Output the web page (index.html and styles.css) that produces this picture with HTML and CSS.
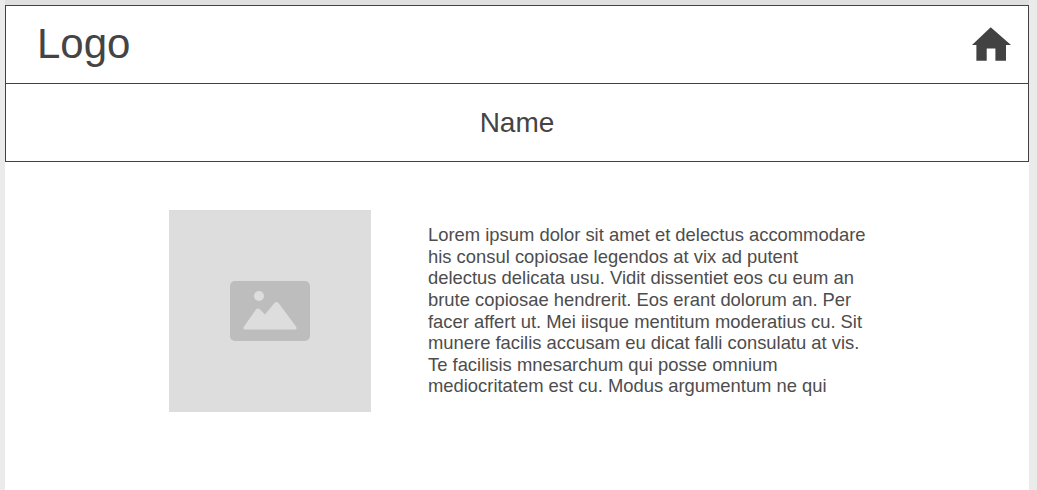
FILE: index.html
```html
<!doctype html>
<html lang="en">
  <head>
    <meta charset="UTF-8" />
    <meta name="viewport" content="width=device-width, initial-scale=1.0" />
    <title>Profile</title>
    <link rel="stylesheet" href="styles.css">
  </head>
  <body>
    <div class="page">
      <header class="top-bar">
        <div class="logo">Logo</div>
        <svg class="home-icon" viewBox="0 0 39 34" aria-label="Home">
          <path d="M18.7 0.2 L39 18 L34 18 L34 33.8 L23.4 33.8 L23.4 21.6 L14.7 21.6 L14.7 33.8 L4.4 33.8 L4.4 18 L0 18 Z" />
        </svg>
      </header>
      <div class="name-bar">Name</div>
      <main class="content">
        <div class="photo">
          <svg class="photo-icon" viewBox="0 0 80 60" aria-hidden="true">
            <rect class="photo-frame" width="80" height="60" rx="5" />
            <circle class="photo-mark" cx="29" cy="15" r="5" />
            <path class="photo-mark" d="M15 48.5 Q12.5 48.5 14 45.5 L26 28.5 Q28 26.5 30 28.5 L35 33.5 L44.5 22 Q46.5 20 48.5 22 L66 45.5 Q67.5 48.5 65 48.5 Z" />
          </svg>
        </div>
        <p class="bio">Lorem ipsum dolor sit amet et delectus accommodare his consul copiosae legendos at vix ad putent delectus delicata usu. Vidit dissentiet eos cu eum an brute copiosae hendrerit. Eos erant dolorum an. Per facer affert ut. Mei iisque mentitum moderatius cu. Sit munere facilis accusam eu dicat falli consulatu at vis. Te facilisis mnesarchum qui posse omnium mediocritatem est cu. Modus argumentum ne qui</p>
      </main>
    </div>
  </body>
</html>
```

FILE: styles.css
```css
html,
body {
  height: 100%;
}

body {
  margin: 0;
  background: #ebebeb;
  font-family: "Liberation Sans", Arial, sans-serif;
  color: #444;
  overflow: hidden;
}

.page {
  width: 1024px;
  height: 485px;
  margin: 0 0 0 5px;
  border-top: 5px solid #e0e0e0;
  background: #fff;
}

.top-bar {
  display: flex;
  align-items: center;
  justify-content: space-between;
  height: 75px;
  padding: 0 17px 2px 31px;
  border: 1px solid #424242;
}

.logo {
  font-size: 42px;
}

.home-icon {
  width: 39px;
  height: 34px;
  fill: #424242;
}

.name-bar {
  height: 77px;
  line-height: 77px;
  border: 1px solid #424242;
  border-top: 0;
  font-size: 28px;
  text-align: center;
}

.content {
  display: flex;
  align-items: center;
  padding: 48px 0 0 164px;
}

.photo {
  display: flex;
  align-items: center;
  justify-content: center;
  flex: none;
  width: 202px;
  height: 202px;
  background: #ddd;
}

.photo-icon {
  width: 80px;
  height: 60px;
}

.photo-frame {
  fill: #bdbdbd;
}

.photo-mark {
  fill: #ddd;
}

.bio {
  width: 440px;
  margin: 0 0 1px 57px;
  font-size: 18.4px;
  line-height: 21.6px;
  opacity: 0.95;
}
```
